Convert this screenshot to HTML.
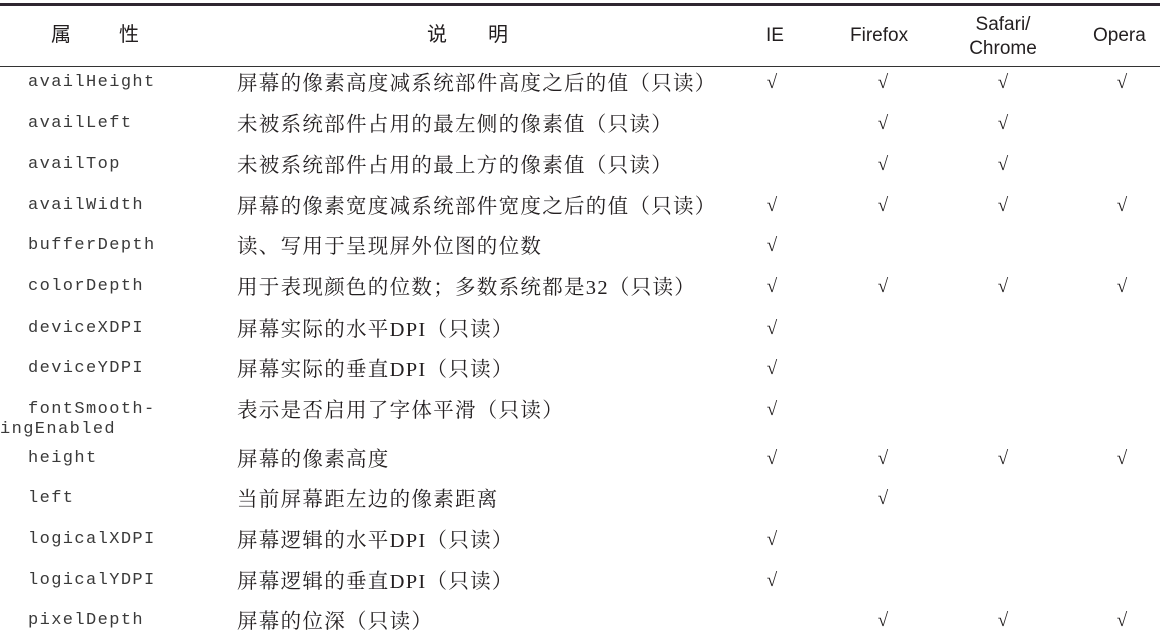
<!DOCTYPE html>
<html><head><meta charset="utf-8"><style>
html,body{margin:0;padding:0;background:#fff;}
body{width:1160px;height:639px;position:relative;overflow:hidden;color:#231f20;}
.t{position:absolute;white-space:nowrap;line-height:1;}
.m{font-family:"Liberation Mono",monospace;font-size:17px;letter-spacing:1.4px;color:#3a3a3a;}
.c{font-family:"Liberation Serif","Noto Serif CJK SC",serif;font-size:20.5px;letter-spacing:1.3px;}
.h{font-family:"Liberation Sans","Noto Sans CJK SC",sans-serif;font-size:19px;}
.hc{font-size:20px;}
.k{font-family:"Liberation Serif",serif;font-size:19px;width:30px;text-align:center;}
</style></head><body>
<div style="position:absolute;left:0;top:3px;width:1160px;height:3px;background:#2e2630"></div>
<div style="position:absolute;left:0;top:66px;width:1160px;height:1px;background:#333"></div>

<div class="t h hc" style="left:51px;top:25px;">属</div>
<div class="t h hc" style="left:119px;top:25px;">性</div>
<div class="t h hc" style="left:427px;top:25px;">说</div>
<div class="t h hc" style="left:488px;top:25px;">明</div>
<div class="t h" style="left:766px;top:26px;">IE</div>
<div class="t h" style="left:850px;top:26px;">Firefox</div>
<div class="t h" style="left:968px;top:13px;width:70px;text-align:center;line-height:24px;white-space:normal;">Safari/<br>Chrome</div>
<div class="t h" style="left:1093px;top:26px;">Opera</div>

<div id="rows"></div>
<script>
var rows=[
["availHeight","屏幕的像素高度减系统部件高度之后的值（只读）",81,[1,1,1,1]],
["availLeft","未被系统部件占用的最左侧的像素值（只读）",122,[0,1,1,0]],
["availTop","未被系统部件占用的最上方的像素值（只读）",163,[0,1,1,0]],
["availWidth","屏幕的像素宽度减系统部件宽度之后的值（只读）",204,[1,1,1,1]],
["bufferDepth","读、写用于呈现屏外位图的位数",244,[1,0,0,0]],
["colorDepth","用于表现颜色的位数；多数系统都是32（只读）",285,[1,1,1,1]],
["deviceXDPI","屏幕实际的水平DPI（只读）",327,[1,0,0,0]],
["deviceYDPI","屏幕实际的垂直DPI（只读）",367,[1,0,0,0]],
["","表示是否启用了字体平滑（只读）",408,[1,0,0,0]],
["height","屏幕的像素高度",457,[1,1,1,1]],
["left","当前屏幕距左边的像素距离",497,[0,1,0,0]],
["logicalXDPI","屏幕逻辑的水平DPI（只读）",538,[1,0,0,0]],
["logicalYDPI","屏幕逻辑的垂直DPI（只读）",579,[1,0,0,0]],
["pixelDepth","屏幕的位深（只读）",619,[0,1,1,1]]
];
var xs=[772,883,1003,1122],h="";
rows.forEach(function(r){
 if(r[0])h+='<div class="t m" style="left:28px;top:'+(r[2]-7)+'px">'+r[0]+'</div>';
 h+='<div class="t c" style="left:237px;top:'+(r[2]-7)+'px">'+r[1]+'</div>';
 r[3].forEach(function(v,i){if(v)h+='<div class="t k" style="left:'+(xs[i]-15)+'px;top:'+(r[2]-8)+'px">√</div>';});
});
h+='<div class="t m" style="left:28px;top:401px">fontSmooth-</div>';
h+='<div class="t m" style="left:0px;top:421px">ingEnabled</div>';
document.getElementById("rows").innerHTML=h;
</script>
</body></html>
